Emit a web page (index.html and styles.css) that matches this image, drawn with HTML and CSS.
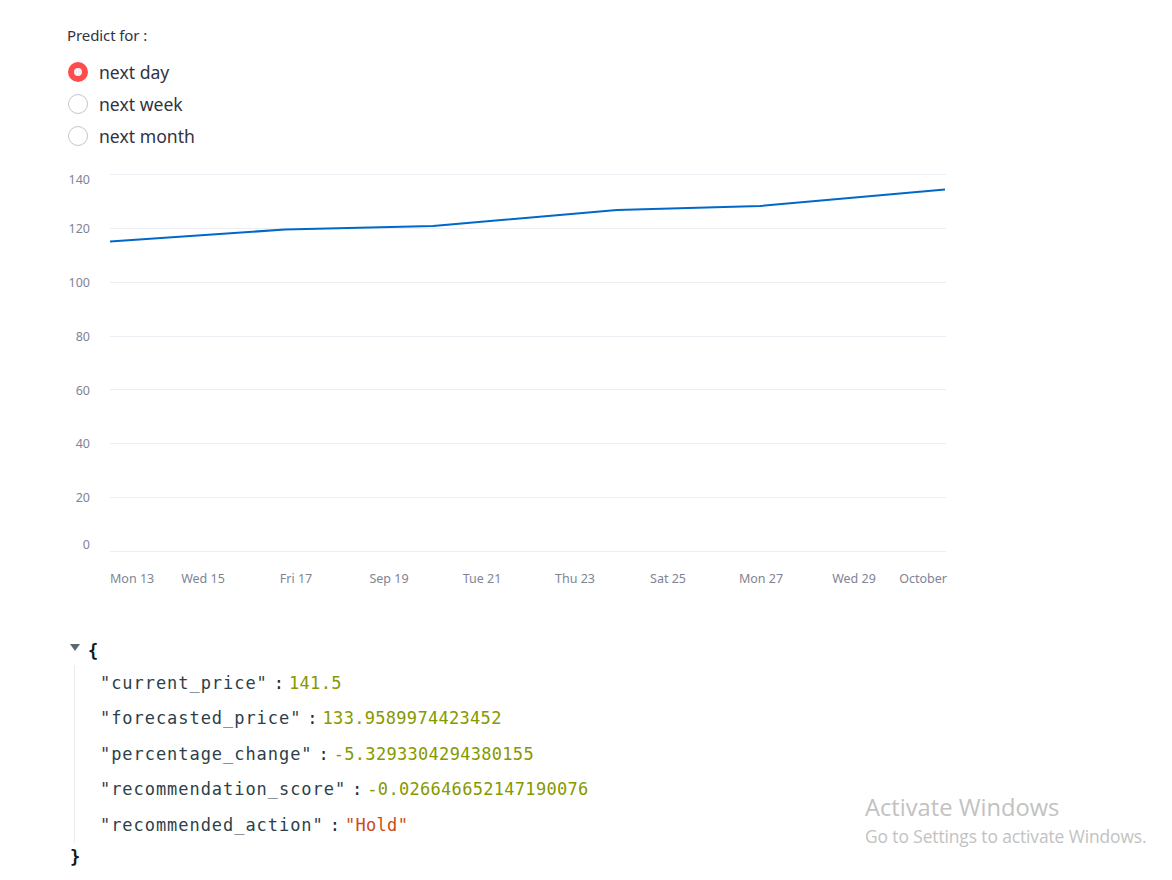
FILE: index.html
```html
<!DOCTYPE html>
<html>
<head>
<meta charset="utf-8">
<link rel="stylesheet" href="styles.css">
</head>
<body>
<main class="page">
  <section class="radio-group">
    <div class="radio-title">Predict for :</div>
    <div class="radio-options">
      <label class="radio-row"><span class="radio-dot checked"></span><span class="radio-label">next day</span></label>
      <label class="radio-row"><span class="radio-dot"></span><span class="radio-label">next week</span></label>
      <label class="radio-row"><span class="radio-dot"></span><span class="radio-label">next month</span></label>
    </div>
  </section>

  <svg class="chart" width="900" height="440" viewBox="60 160 900 440" xmlns="http://www.w3.org/2000/svg">
    <g class="grid">
      <line x1="110" x2="946" y1="174.5" y2="174.5"/>
      <line x1="110" x2="946" y1="228.5" y2="228.5"/>
      <line x1="110" x2="946" y1="282.5" y2="282.5"/>
      <line x1="110" x2="946" y1="336.5" y2="336.5"/>
      <line x1="110" x2="946" y1="389.5" y2="389.5"/>
      <line x1="110" x2="946" y1="443.5" y2="443.5"/>
      <line x1="110" x2="946" y1="497.5" y2="497.5"/>
      <line x1="110" x2="946" y1="551.5" y2="551.5"/>
    </g>
    <g class="ylab">
      <text x="90" y="180.5">140</text>
      <text x="90" y="230">120</text>
      <text x="90" y="284">100</text>
      <text x="90" y="338">80</text>
      <text x="90" y="391.5">60</text>
      <text x="90" y="445">40</text>
      <text x="90" y="499">20</text>
      <text x="90" y="546">0</text>
    </g>
    <g class="xlab">
      <text x="110" y="580" class="start">Mon 13</text>
      <text x="203" y="580">Wed 15</text>
      <text x="296" y="580">Fri 17</text>
      <text x="389" y="580">Sep 19</text>
      <text x="482" y="580">Tue 21</text>
      <text x="575" y="580">Thu 23</text>
      <text x="668" y="580">Sat 25</text>
      <text x="761" y="580">Mon 27</text>
      <text x="854" y="580">Wed 29</text>
      <text x="947" y="580" class="end">October</text>
    </g>
    <polyline class="series" points="110,241.5 285,229.5 433,226 617,210 760,206 945,189.5"/>
  </svg>

  <section class="json">
    <div class="json-open"><span class="caret"></span><span class="brace">{</span></div>
    <div class="json-body">
      <div class="json-row"><span class="key">"current_price"</span><span class="colon">:</span><span class="num">141.5</span></div>
      <div class="json-row"><span class="key">"forecasted_price"</span><span class="colon">:</span><span class="num">133.9589974423452</span></div>
      <div class="json-row"><span class="key">"percentage_change"</span><span class="colon">:</span><span class="num">-5.3293304294380155</span></div>
      <div class="json-row"><span class="key">"recommendation_score"</span><span class="colon">:</span><span class="num">-0.026646652147190076</span></div>
      <div class="json-row"><span class="key">"recommended_action"</span><span class="colon">:</span><span class="str">"Hold"</span></div>
    </div>
    <div class="json-close"><span class="brace">}</span></div>
  </section>
</main>

<div class="activate">
  <div class="activate-title">Activate Windows</div>
  <div class="activate-sub">Go to Settings to activate Windows.</div>
</div>
</body>
</html>
```

FILE: styles.css
```css
html, body {
  margin: 0;
  padding: 0;
  background: #ffffff;
}

body {
  font-family: "Noto Sans", "Open Sans", sans-serif;
  color: #31333f;
  width: 1172px;
  height: 880px;
  overflow: hidden;
  position: relative;
}

.page {
  display: flex;
  flex-direction: column;
  padding-left: 60px;
}

.radio-group {
  display: flex;
  flex-direction: column;
  padding-top: 25px;
  padding-left: 7px;
}

.radio-title {
  font-size: 15px;
  line-height: 21px;
  height: 21px;
  color: #31333f;
  letter-spacing: -0.1px;
}

.radio-options {
  display: flex;
  flex-direction: column;
  margin-top: 10px;
}

.radio-row {
  display: flex;
  align-items: center;
  height: 32px;
  gap: 11px;
}

.radio-dot {
  width: 20px;
  height: 20px;
  box-sizing: border-box;
  border-radius: 50%;
  border: 1px solid #c4c5cb;
  background: #ffffff;
  flex: 0 0 auto;
  margin-left: 1px;
  display: flex;
  align-items: center;
  justify-content: center;
}

.radio-dot.checked {
  border: none;
  background: #ff4b4b;
}

.radio-dot.checked::after {
  content: "";
  width: 8px;
  height: 8px;
  border-radius: 50%;
  background: #f0f2f6;
}

.radio-label {
  font-size: 17.6px;
  color: #31333f;
}

.chart {
  display: block;
  margin-top: 8px;
}

.grid line {
  stroke: #eceef3;
  stroke-width: 1;
}

.ylab text,
.xlab text {
  font-family: "Noto Sans", "Open Sans", sans-serif;
  font-size: 12.5px;
  fill: #808495;
  dominant-baseline: middle;
}

.ylab text {
  text-anchor: end;
}

.xlab text {
  text-anchor: middle;
}

.xlab text.start {
  text-anchor: start;
}

.xlab text.end {
  text-anchor: end;
}

.series {
  fill: none;
  stroke: #0068c9;
  stroke-width: 2;
  stroke-linejoin: round;
}

.json {
  display: flex;
  flex-direction: column;
  margin-top: 37px;
  font-family: "DejaVu Sans Mono", "Liberation Mono", monospace;
  font-size: 17px;
  color: #31333f;
}

.json-open {
  display: flex;
  align-items: center;
  height: 28px;
  padding-left: 10px;
}

.caret {
  width: 0;
  height: 0;
  border-left: 5px solid transparent;
  border-right: 5px solid transparent;
  border-top: 7px solid #5a6a75;
  margin-right: 8px;
  margin-top: -8px;
}

.brace {
  font-weight: bold;
  color: #0b1a24;
}

.json-body {
  display: flex;
  flex-direction: column;
  margin-left: 14px;
  border-left: 1px solid #ebebeb;
  padding-left: 25px;
}

.json-row {
  display: flex;
  align-items: center;
  height: 35.5px;
  white-space: pre;
}

.key {
  color: #2e3f49;
  letter-spacing: 0.95px;
}

.colon {
  color: #1e2a32;
  margin: 0 5px 0 6px;
}

.num {
  color: #859900;
  letter-spacing: 0.3px;
}

.str {
  color: #cb4b16;
  letter-spacing: 0.3px;
}

.json-close {
  display: flex;
  align-items: center;
  height: 29px;
  padding-left: 10px;
}

.activate {
  position: absolute;
  left: 865px;
  top: 792px;
  color: #c2c2c2;
  font-family: "Open Sans", "Noto Sans", sans-serif;
}

.activate-title {
  font-size: 23.7px;
  line-height: 31px;
}

.activate-sub {
  font-size: 17.4px;
  line-height: 26px;
  letter-spacing: -0.1px;
}
```
